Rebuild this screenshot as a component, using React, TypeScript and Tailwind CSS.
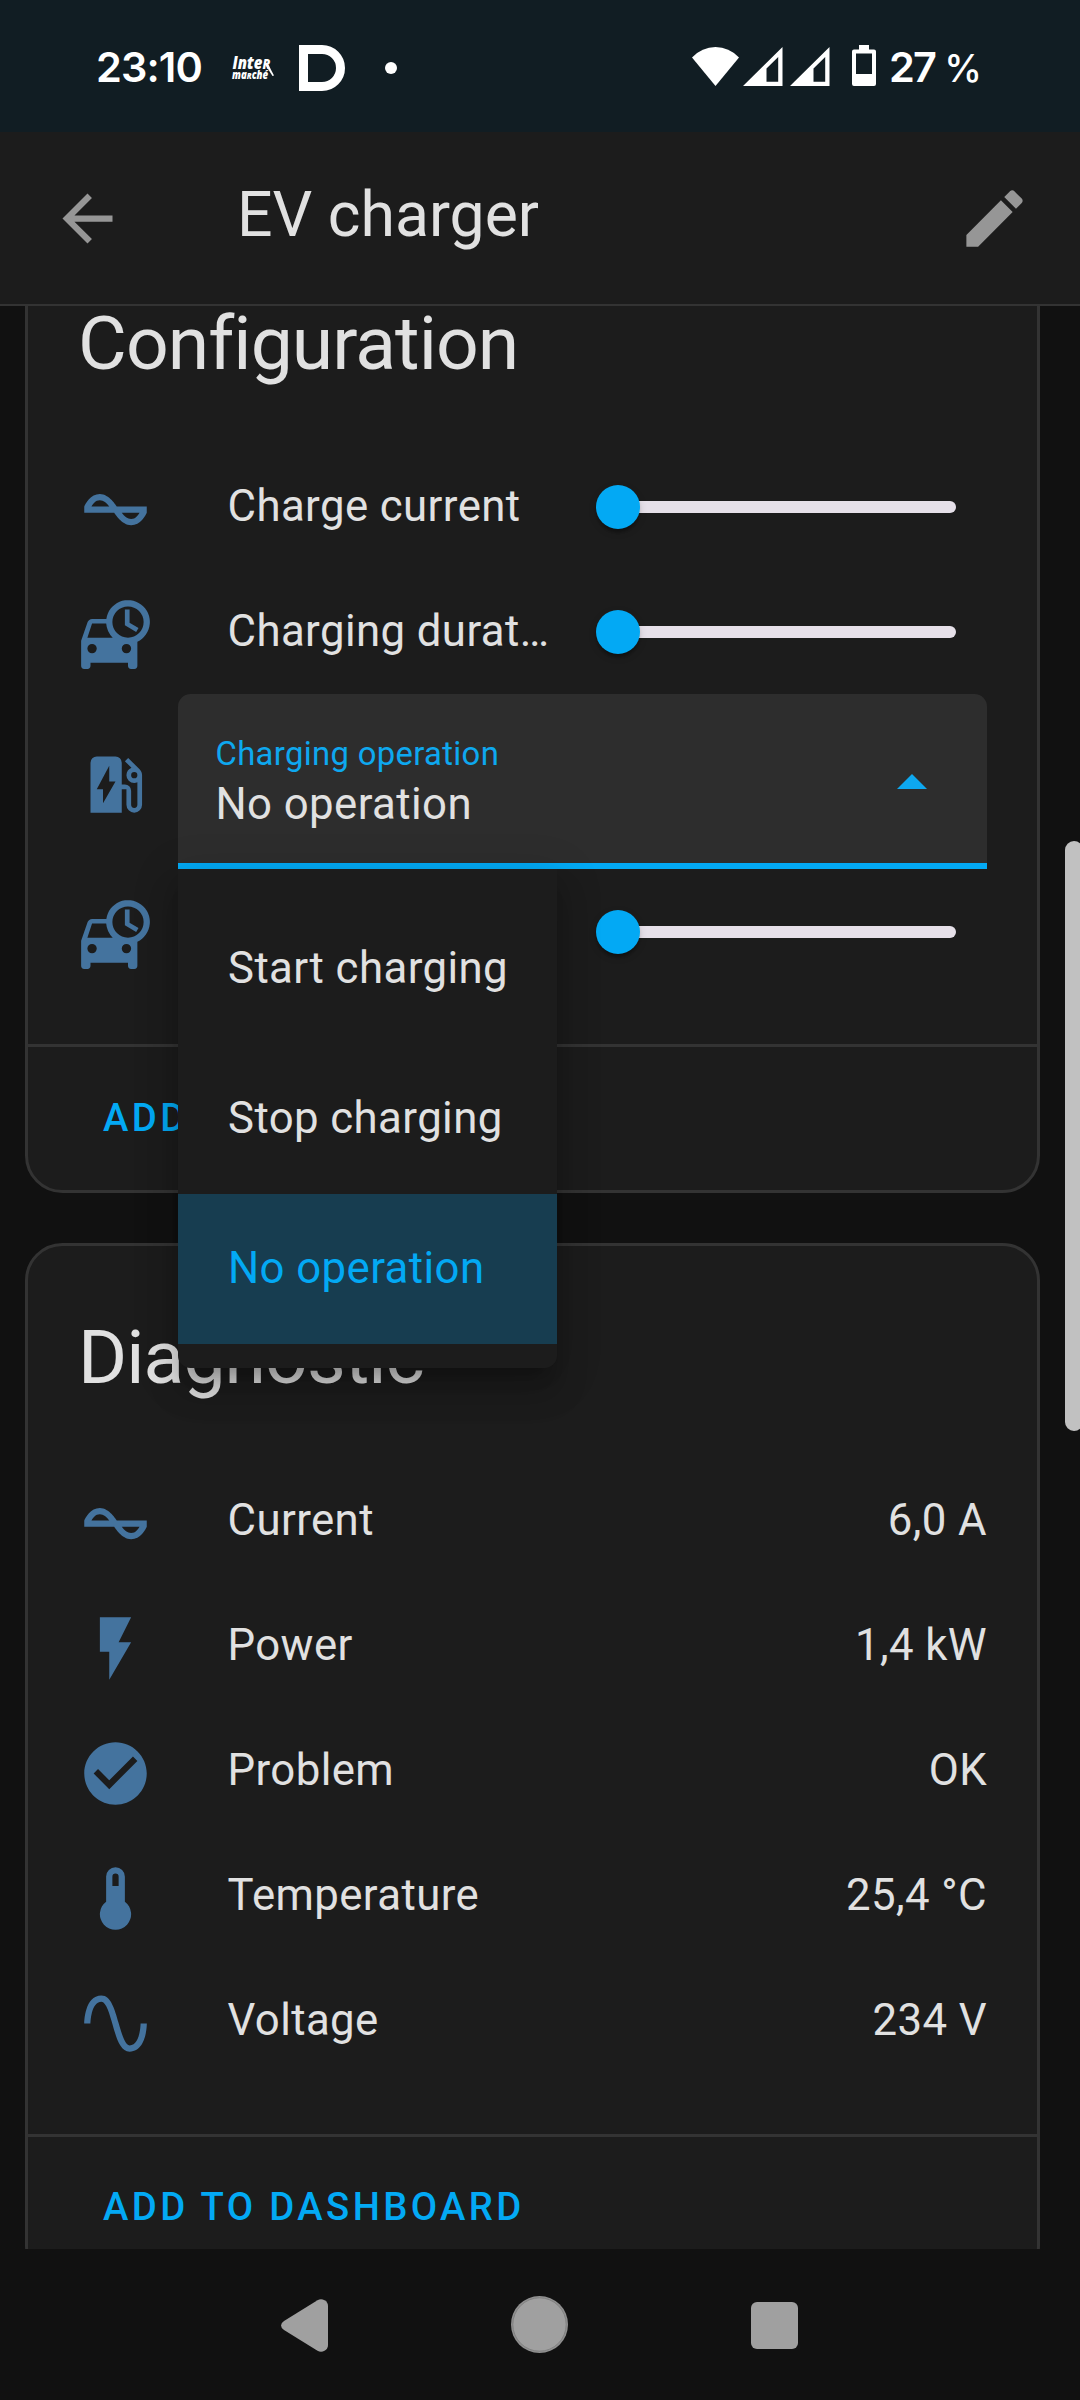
import React from "react";

const ICONS = {
  current:
    "M12.43 11C12.28 10.84 10 7 7 7S2.32 10.18 2 11V13H11.57C11.72 13.16 14 17 17 17S21.68 13.82 22 13V11H12.43M7 9C8.17 9 9.18 9.85 10 11H4.31C4.78 10.17 5.54 9 7 9M17 15C15.83 15 14.82 14.15 14 13H19.69C19.22 13.83 18.46 15 17 15Z",
  carClock:
    "M1 14L3.08 8.03C3.29 7.42 3.84 7 4.5 7H9.07A7 7 0 1 1 19 14.33V22A1 1 0 0 1 18 23H17A1 1 0 0 1 16 22V21H4V22A1 1 0 0 1 3 23H2A1 1 0 0 1 1 22ZM16 3A5 5 0 1 0 16 13A5 5 0 1 0 16 3ZM3 13H11.1A7 7 0 0 1 9.02 8.5H4.5ZM4.5 15A1.5 1.5 0 1 0 4.5 18A1.5 1.5 0 1 0 4.5 15ZM15.5 15A1.5 1.5 0 1 0 15.5 18A1.5 1.5 0 1 0 15.5 15ZM15 4H16.5V8.25L19.36 9.94L18.61 11.16L15 9Z",
  station:
    "M19.77,7.23L19.78,7.22L16.06,3.5L15,4.56L17.11,6.67C16.17,7.03 15.5,7.93 15.5,9A2.5,2.5 0 0,0 18,11.5C18.36,11.5 18.69,11.42 19,11.29V18.5A1,1 0 0,1 18,19.5A1,1 0 0,1 17,18.5V14A2,2 0 0,0 15,12H14V5A2,2 0 0,0 12,3H6A2,2 0 0,0 4,5V21H14V13.5H15.5V18.5A2.5,2.5 0 0,0 18,21A2.5,2.5 0 0,0 20.5,18.5V9C20.5,8.31 20.22,7.68 19.77,7.23M18,10A1,1 0 0,1 17,9A1,1 0 0,1 18,8A1,1 0 0,1 19,9A1,1 0 0,1 18,10M8,18V13.5H6L10,6V11H12L8,18Z",
  flash: "M7,2V13H10V22L17,10H13L17,2H7Z",
  check:
    "M12 2C6.5 2 2 6.5 2 12S6.5 22 12 22 22 17.5 22 12 17.5 2 12 2M10 17L5 12L6.41 10.59L10 14.17L17.59 6.58L19 8L10 17Z",
  thermometer:
    "M15 13V5A3 3 0 0 0 9 5V13A5 5 0 1 0 15 13M12 4A1 1 0 0 1 13 5V8H11V5A1 1 0 0 1 12 4Z",
  sine:
    "M16.5,21C13.5,21 12.31,16.76 11.05,12.28C10.14,9.04 9,5 7.5,5C4.11,5 4,11.93 4,12H2C2,11.63 2.06,3 7.5,3C10.5,3 11.71,7.25 12.97,11.74C13.83,14.8 15,19 16.5,19C19.94,19 20.03,12.07 20.03,12H22.03C22.03,12.37 21.97,21 16.5,21Z",
  back: "M20,11V13H7.83L13.42,18.59L12,20L4,12L12,4L13.42,5.41L7.83,11H20Z",
  pencil:
    "M20.71,7.04C21.1,6.65 21.1,6 20.71,5.63L18.37,3.29C18,2.9 17.35,2.9 16.96,3.29L15.12,5.12L18.87,8.87M3,17.25V21H6.75L17.81,9.93L14.06,6.18L3,17.25Z",
};

type IconName = keyof typeof ICONS;

function Icon({ name, className = "" }: { name: IconName; className?: string }) {
  return (
    <svg viewBox="0 0 24 24" className={`size-[75px] shrink-0 ${className}`} fill="currentColor" fillRule="evenodd">
      <path d={ICONS[name]} />
    </svg>
  );
}

function Signal() {
  return (
    <svg viewBox="0 0 40 39" className="h-[39px] w-[40px]" fill="#fff" fillRule="evenodd">
      <path d="M0 39L39.5 0V39ZM23.5 34.7H35.2V10L23.5 21.5Z" />
    </svg>
  );
}

function StatusBar() {
  return (
    <div className="flex h-[132px] shrink-0 items-center justify-between bg-[#111d23] pr-[98px] pl-[96px] text-white">
      <div className="flex items-center pt-1">
        <span className="w-[136px] font-['Inter'] text-[41.5px] leading-none font-semibold tracking-[-0.9px] whitespace-nowrap">
          23:10
        </span>
        <svg viewBox="0 0 44 26" className="h-[26px] w-[44px] overflow-visible" fill="#fff">
          <g fontFamily="'Open Sans', sans-serif" fontWeight="800" fontStyle="italic">
            <text x="0.5" y="14" fontSize="17" textLength="38" lengthAdjust="spacingAndGlyphs">
              Inte<tspan fontSize="14">R</tspan>
            </text>
            <text x="0" y="23.5" fontSize="12" textLength="36" lengthAdjust="spacingAndGlyphs">
              ma<tspan fontSize="9.5">R</tspan>ché
            </text>
          </g>
          <path d="M33.5 10L36.5 10L42 20.5L40.5 21Z" />
        </svg>
        <div className="ml-[23px] size-[46px] rounded-r-[23px] border-[9px] border-white" />
        <div className="ml-10 size-3 rounded-full bg-white" />
      </div>
      <div className="flex items-center">
        <svg viewBox="0 0 47 39" className="h-[39px] w-[47px]" fill="#fff">
          <path d="M0 10.5Q10 0 23.5 0T47 10.5L23.5 39Z" />
        </svg>
        <div className="ml-1 flex gap-[7px]">
          <Signal />
          <Signal />
        </div>
        <svg viewBox="0 0 24 41" className="mb-[2px] ml-[22px] h-[41px] w-[24px]" fill="#fff" fillRule="evenodd">
          <path d="M7 0H17V4.5H22Q24 4.5 24 6.5V39Q24 41 22 41H2Q0 41 0 39V6.5Q0 4.5 2 4.5H7ZM4 8.5V29H20V8.5Z" />
        </svg>
        <span className="mt-[3px] ml-[13px] flex w-[93px] items-center justify-between font-['Inter'] text-[41.5px] leading-none font-semibold tracking-[-1.8px] whitespace-nowrap">
          <span>27</span>
          <span className="text-[38px] font-medium tracking-normal">%</span>
        </span>
      </div>
    </div>
  );
}

function Header() {
  return (
    <header className="flex h-[174px] shrink-0 items-center border-b-2 border-[#333333] bg-[#1c1c1c] pr-[48px] pl-[50px]">
      <Icon name="back" className="text-[#969696]" />
      <h1 className="ml-[112px] flex-1 pb-[6px] text-[62.5px] leading-none">EV charger</h1>
      <Icon name="pencil" className="text-[#969696]" />
    </header>
  );
}

function Card({ title, children }: { title: string; children: React.ReactNode }) {
  return (
    <section className="rounded-[37.5px] border-[3px] border-[#333333] bg-[#1c1c1c]">
      <h2 className="h-[212.5px] px-[50px] pt-[36px] text-[75px] leading-[150px] tracking-[-0.0125em]">{title}</h2>
      <div className="px-[50px] pb-[50px]">{children}</div>
      <div className="flex h-[146px] items-center border-t-[3px] border-[#333333] pb-[1px] pl-[75px]">
        <button className="text-[38.28px] leading-none font-medium tracking-[0.0885em] text-[#03a9f4]">
          ADD TO DASHBOARD
        </button>
      </div>
    </section>
  );
}

function Row({ icon, children }: { icon: IconName; children: React.ReactNode }) {
  return (
    <div className="flex min-h-[125px] items-center">
      <Icon name={icon} className="mt-[5px] text-[#44739e]" />
      {children}
    </div>
  );
}

function SliderRow({ icon, label }: { icon: IconName; label: string }) {
  return (
    <Row icon={icon}>
      <span className="ml-[74.5px] w-[325px] truncate pb-[2px] leading-[60px]">{label}</span>
      <div className="relative mr-[31px] ml-[59px] h-3 flex-1 rounded-full bg-[#e6e0e9]">
        <div className="absolute -top-4 -left-[16px] size-[44px] rounded-full bg-[#03a9f4] shadow-[0_6px_3px_-3px_rgba(0,0,0,0.2),0_3px_3px_0_rgba(0,0,0,0.14),0_3px_9px_0_rgba(0,0,0,0.12)]" />
      </div>
    </Row>
  );
}

function ValueRow({ icon, label, value }: { icon: IconName; label: string; value: string }) {
  return (
    <Row icon={icon}>
      <span className="ml-[74.5px] flex-1 pb-[2px] leading-[60px]">{label}</span>
      <span className="pb-[2px] leading-[60px]">{value}</span>
    </Row>
  );
}

const OPTIONS = ["Start charging", "Stop charging", "No operation"];

function Select() {
  const value = "No operation";
  return (
    <div className="relative -mt-[0.5px] ml-[25px] flex h-[175px] flex-1 items-center justify-between rounded-t-[12.5px] border-b-[6px] border-[#03a9f4] bg-[#2d2d2d] pr-[60px] pl-[37.5px]">
      <div className="flex flex-col">
        <span className="h-[51px] text-[32.8px] leading-[53px] tracking-[0.34px] text-[#0ea8ef]">Charging operation</span>
        <span className="h-[51px] leading-[50px]">{value}</span>
      </div>
      <svg viewBox="0 0 30 15" className="mt-[6px] h-[15px] w-[30px]" fill="#0ea8ef">
        <path d="M0 15L15 0L30 15Z" />
      </svg>
      <ul className="absolute top-[175px] left-0 z-10 w-[379px] rounded-b-[12.5px] bg-[#1c1c1c] pt-[25px] pb-[24px] shadow-[0_16px_16px_-9px_rgba(0,0,0,0.2),0_25px_31px_3px_rgba(0,0,0,0.14),0_9px_44px_6px_rgba(0,0,0,0.12)]">
        {OPTIONS.map((option) => (
          <li
            key={option}
            className={
              option === value
                ? "flex h-[150px] items-center bg-[#173d50] pl-[50px] text-[#03a9f4]"
                : "flex h-[150px] items-center pl-[50px]"
            }
          >
            {option}
          </li>
        ))}
      </ul>
    </div>
  );
}

function NavBar() {
  return (
    <nav className="flex h-[151px] shrink-0 items-center justify-center gap-[183px] bg-[#111111] pr-[1px]">
      <svg viewBox="0 0 47 53" className="mt-[1px] h-[53px] w-[47px]" fill="#a0a0a0">
        <path d="M3 22L36.5 1.2Q40 -0.8 43.5 1.2Q47 3.2 47 7V46Q47 49.8 43.5 51.8Q40 53.8 36.5 51.8L3 31Q0 29 0 26.5T3 22Z" />
      </svg>
      <svg viewBox="0 0 56 56" className="size-[57px]">
        <circle cx="28" cy="28" r="28" fill="#909090" />
        <circle cx="28" cy="28" r="26.2" fill="#a0a0a0" stroke="#7c7c7c" strokeWidth="0.8" />
      </svg>
      <div className="mt-[2px] size-[47px] rounded-[6px] bg-[#a0a0a0]" />
    </nav>
  );
}

export default function App() {
  return (
    <div className="flex h-[2400px] w-[1080px] flex-col overflow-hidden bg-[#111111] font-['Roboto',sans-serif] text-[#e1e1e1]">
      <StatusBar />
      <Header />
      <main className="relative min-h-0 flex-1 overflow-hidden">
        <div className="-mt-[77px] ml-[25px] flex w-[1015px] flex-col gap-[50px] text-[43.75px] tracking-[0.009375em]">
          <Card title="Configuration">
            <SliderRow icon="current" label="Charge current" />
            <SliderRow icon="carClock" label="Charging duration" />
            <Row icon="station">
              <Select />
            </Row>
            <SliderRow icon="carClock" label="" />
          </Card>
          <Card title="Diagnostic">
            <ValueRow icon="current" label="Current" value="6,0 A" />
            <ValueRow icon="flash" label="Power" value="1,4 kW" />
            <ValueRow icon="check" label="Problem" value="OK" />
            <ValueRow icon="thermometer" label="Temperature" value="25,4 °C" />
            <ValueRow icon="sine" label="Voltage" value="234 V" />
          </Card>
        </div>
        <div className="absolute top-[535px] -right-[3px] h-[590px] w-[18px] rounded-full bg-[#c1c1c1]" />
      </main>
      <NavBar />
    </div>
  );
}
